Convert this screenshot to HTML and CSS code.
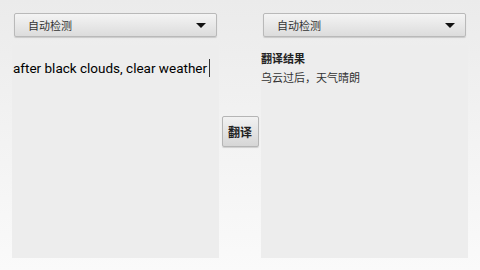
FILE: index.html
```html
<!DOCTYPE html>
<html lang="zh-CN">
<head>
    <meta charset="UTF-8">
    <title>翻译</title>
    <link rel="stylesheet" href="styles.css">
</head>
<body>
    <div class="screen">
        <div class="column">
            <div class="spinner">
                <span>自动检测</span>
                <i class="arrow"></i>
            </div>
            <div class="panel">
                <div class="source">after black clouds, clear weather<span class="cursor"></span></div>
            </div>
        </div>
        <div class="middle">
            <button class="translate-btn">翻译</button>
        </div>
        <div class="column">
            <div class="spinner">
                <span>自动检测</span>
                <i class="arrow"></i>
            </div>
            <div class="panel">
                <div class="result-title">翻译结果</div>
                <div class="result-text">乌云过后，天气晴朗</div>
            </div>
        </div>
    </div>
</body>
</html>
```
FILE: styles.css
```css
body {
    margin: 0;
    font-family: Roboto, "Noto Sans CJK SC", sans-serif;
    color: #222;
}

.screen {
    width: 480px;
    height: 270px;
    background: linear-gradient(to bottom, #ebebeb, #fafafa);
    display: flex;
    padding: 13px 12px 12px;
    box-sizing: border-box;
}

.column {
    width: 207px;
    display: flex;
    flex-direction: column;
}

.spinner {
    margin: 0 2px;
    height: 24px;
    box-sizing: border-box;
    border: 1px solid #b9b9b9;
    border-radius: 2px;
    background: linear-gradient(to bottom, #f4f4f4, #dcdcdc);
    box-shadow: 0 1px 1px rgba(0, 0, 0, 0.15);
    display: flex;
    align-items: center;
    justify-content: space-between;
    padding: 0 10px 0 13px;
    font-size: 11px;
    color: #333;
}

.arrow {
    width: 0;
    height: 0;
    border-left: 5px solid transparent;
    border-right: 5px solid transparent;
    border-top: 5px solid #111;
}

.panel {
    flex: 1;
    margin-top: 8px;
    background: #ededed;
}

.source {
    margin-top: 14px;
    padding-left: 1px;
    font-size: 13.5px;
    line-height: 18px;
    color: #000;
    white-space: nowrap;
}

.cursor {
    display: inline-block;
    width: 1px;
    height: 18px;
    background: #333;
    margin-left: 2px;
    vertical-align: -4px;
}

.middle {
    width: 42px;
    display: flex;
    align-items: center;
    justify-content: center;
    padding-bottom: 9px;
}

.translate-btn {
    width: 37px;
    height: 31px;
    border: 1px solid #b5b5b5;
    border-radius: 2px;
    background: linear-gradient(to bottom, #f2f2f2, #d6d6d6);
    box-shadow: 0 1px 1px rgba(0, 0, 0, 0.15);
    font-family: "Noto Sans CJK SC", sans-serif;
    font-size: 12px;
    font-weight: bold;
    color: #222;
    padding: 0;
}

.result-title {
    margin-top: 7px;
    font-size: 11px;
    font-weight: bold;
    line-height: 16px;
}

.result-text {
    margin-top: 3px;
    font-size: 11px;
    line-height: 16px;
    color: #333;
}
```
